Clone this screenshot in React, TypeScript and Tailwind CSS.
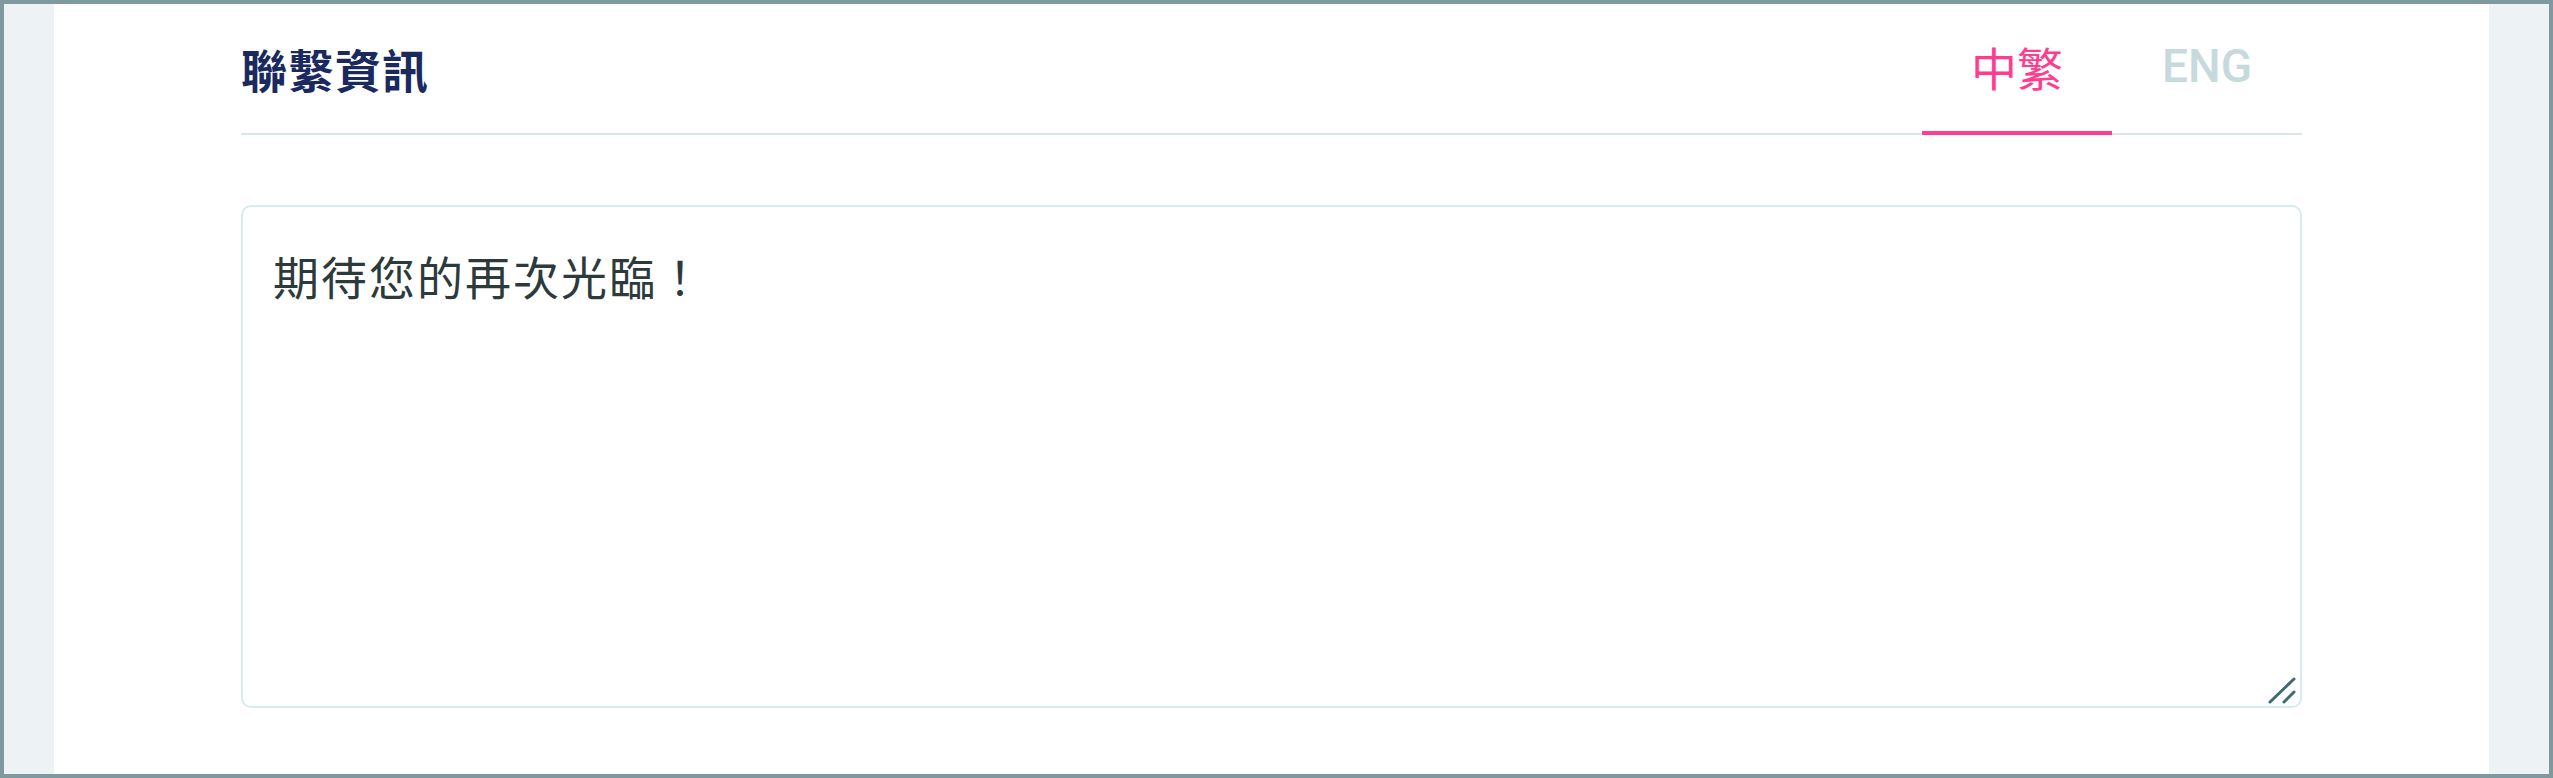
import React from "react";

const cjk = "font-['Noto_Sans_CJK_TC','Noto_Sans_CJK_SC',sans-serif]";

const tabs = [
  { key: "zh", label: "中繁", active: true },
  { key: "en", label: "ENG", active: false },
];

export default function App() {
  return (
    <div className="flex h-[778px] w-[2553px] border-4 border-[#7f999e] bg-[#edf3f4]">
      <div className="w-[50px] shrink-0" />

      <div className="flex flex-1 flex-col bg-white px-[187px]">
        {/* header */}
        <div className="flex h-[131px] items-stretch justify-between border-b-2 border-[#dae6e9]">
          <h2
            className={`self-center pb-[2px] text-[46px] font-bold leading-none tracking-[1px] text-[#1b2a5e] ${cjk}`}
          >
            聯繫資訊
          </h2>
          <div className="-mb-[2px] flex">
            {tabs.map((t) => (
              <button
                key={t.key}
                className={
                  t.active
                    ? `flex w-[190px] items-center justify-center border-b-[4px] border-[#ff3c8e] pb-[4px] text-[46px] leading-none text-[#ff3c8e] ${cjk}`
                    : "flex w-[190px] items-center justify-center border-b-[4px] border-transparent pb-[4px] font-['Roboto',sans-serif] text-[46px] font-medium leading-none text-[#c6dade]"
                }
              >
                {t.label}
              </button>
            ))}
          </div>
        </div>

        {/* message */}
        <div className="relative mt-[70px] h-[503px]">
          <textarea
            defaultValue="期待您的再次光臨！"
            className={`h-full w-full resize-none rounded-[10px] border-2 border-[#d6ebef] px-[30px] py-[34px] text-[46px] leading-[1.5] tracking-[2px] text-[#2d3a3c] outline-none ${cjk}`}
          />
          <svg
            className="pointer-events-none absolute bottom-[4px] right-[4px]"
            width="30"
            height="28"
            viewBox="0 0 30 28"
          >
            <path
              d="M2 26 L26 3 M16 26 L26 16"
              stroke="#3e6b71"
              strokeWidth="3"
              strokeLinecap="round"
              fill="none"
            />
          </svg>
        </div>
      </div>

      <div className="w-[60px] shrink-0" />
    </div>
  );
}
